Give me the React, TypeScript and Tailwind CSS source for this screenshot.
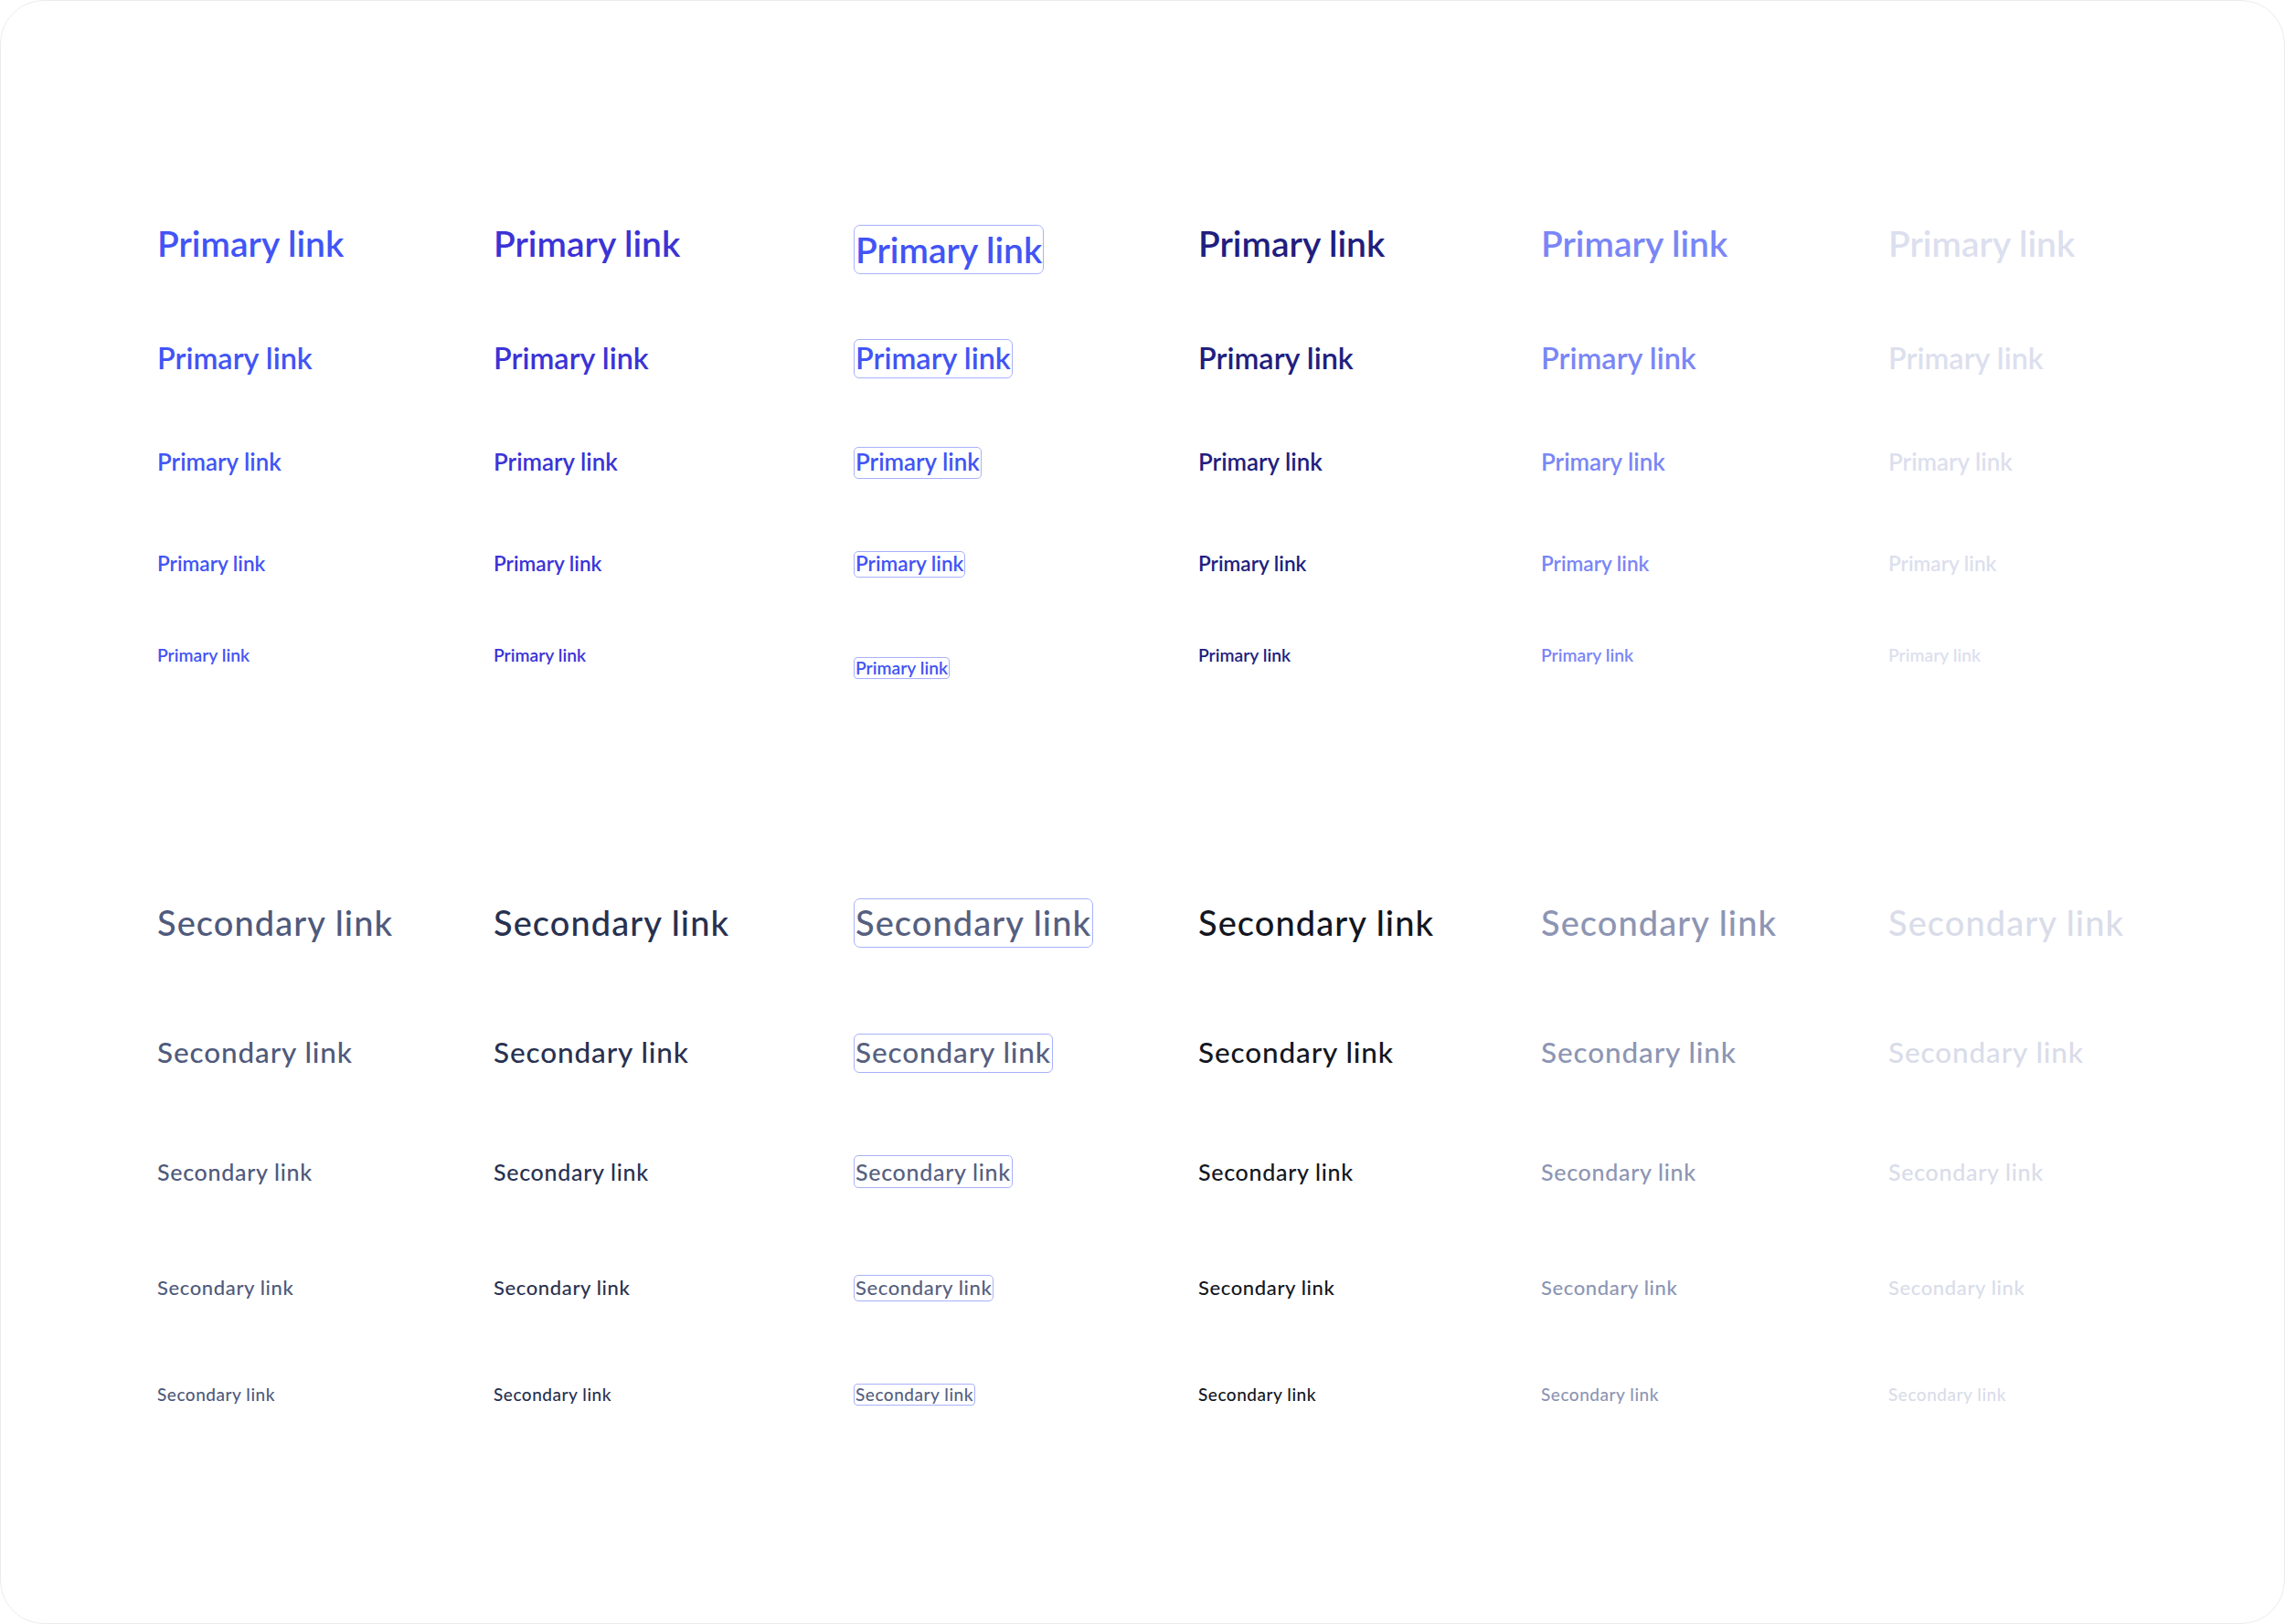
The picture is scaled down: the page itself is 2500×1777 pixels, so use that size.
import React from "react";

type Cell = { color: string; focus?: boolean };

const primaryCols: Cell[] = [
  { color: "text-[#4254f5]" },
  { color: "text-[#3b33d6]" },
  { color: "text-[#4254f5]", focus: true },
  { color: "text-[#211e7e]" },
  { color: "text-[#7a86f6]" },
  { color: "text-[#dcdfee]" },
];

const secondaryCols: Cell[] = [
  { color: "text-[#4f5a7c]" },
  { color: "text-[#283150]" },
  { color: "text-[#56607f]", focus: true },
  { color: "text-[#131621]" },
  { color: "text-[#8d95b3]" },
  { color: "text-[#d9dce9]" },
];

const colWidths = ["w-[368px]", "w-[394px]", "w-[377px]", "w-[375px]", "w-[380px]", "w-[300px]"];

type RowSpec = {
  size: string;
  box: string;
  radius: string;
  mt: string;
  focusShift?: string;
};

const primaryRows: RowSpec[] = [
  { size: "text-[39px]", box: "h-[54px]", radius: "rounded-[7px]", mt: "mt-0", focusShift: "mt-[14px]" },
  { size: "text-[32.4px]", box: "h-[43px]", radius: "rounded-[6px]", mt: "mt-[66px]" },
  { size: "text-[25.9px]", box: "h-[35px]", radius: "rounded-[5px]", mt: "mt-[54px]" },
  { size: "text-[22.6px]", box: "h-[29px]", radius: "rounded-[5px]", mt: "mt-[51px]" },
  { size: "text-[19.3px]", box: "h-[24px]", radius: "rounded-[4px]", mt: "mt-[40px]", focusShift: "mt-[28px]" },
];

const secondaryRows: RowSpec[] = [
  { size: "text-[38px]", box: "h-[54px]", radius: "rounded-[7px]", mt: "mt-0" },
  { size: "text-[31.5px]", box: "h-[43px]", radius: "rounded-[6px]", mt: "mt-[82px]" },
  { size: "text-[25px]", box: "h-[36px]", radius: "rounded-[5px]", mt: "mt-[70px]" },
  { size: "text-[22px]", box: "h-[29px]", radius: "rounded-[5px]", mt: "mt-[67px]" },
  { size: "text-[19px]", box: "h-[24px]", radius: "rounded-[4px]", mt: "mt-[57px]" },
];

function Row({
  label,
  cols,
  spec,
  weight,
}: {
  label: string;
  cols: Cell[];
  spec: RowSpec;
  weight: string;
}) {
  return (
    <div className={`flex h-[60px] items-center ${spec.mt}`}>
      {cols.map((c, i) => (
        <div key={i} className={`flex h-full shrink-0 items-center ${colWidths[i]}`}>
          {c.focus ? (
            <a
              href="#"
              className={`inline-flex items-center whitespace-nowrap border-[1.5px] border-[#a8b1fb] px-[1px] leading-[1.2] ${spec.box} ${spec.radius} ${spec.size} ${weight} ${c.color} ${spec.focusShift ?? ""}`}
            >
              {label}
            </a>
          ) : (
            <a href="#" className={`whitespace-nowrap leading-[1.2] ${spec.size} ${weight} ${c.color}`}>
              {label}
            </a>
          )}
        </div>
      ))}
    </div>
  );
}

export default function App() {
  return (
    <div className="h-[1777px] w-[2500px] bg-white" style={{ fontFamily: "Lato, 'Noto Sans', sans-serif" }}>
      <div className="h-full w-full overflow-hidden rounded-[48px] border border-[#ececec] bg-white pl-[171px] pt-[235px]">
        <div className="flex flex-col">
          {primaryRows.map((r, i) => (
            <Row key={i} label="Primary link" cols={primaryCols} spec={r} weight="font-semibold" />
          ))}
        </div>
        <div className="mt-[233px] flex flex-col">
          {secondaryRows.map((r, i) => (
            <Row
              key={i}
              label="Secondary link"
              cols={secondaryCols}
              spec={r}
              weight="font-medium tracking-[0.028em]"
            />
          ))}
        </div>
      </div>
    </div>
  );
}
